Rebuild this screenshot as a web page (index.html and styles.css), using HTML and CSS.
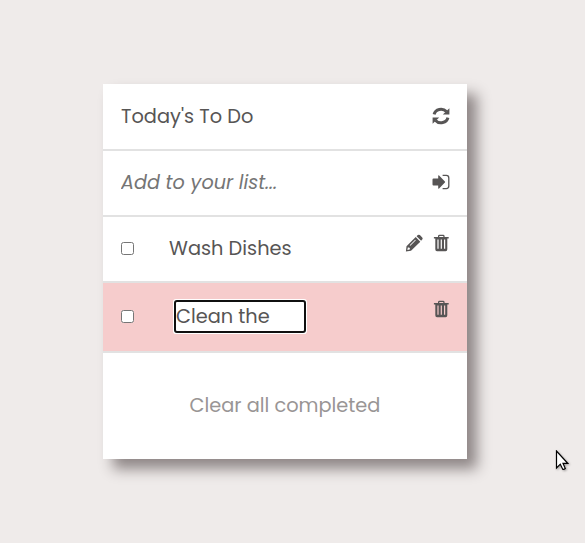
FILE: index.html
```html
<!DOCTYPE html>
<html lang="en">
<head>
<meta charset="utf-8">
<title>To Do List</title>
<link rel="stylesheet" href="styles.css">
</head>
<body>
<main class="card">
  <header class="row">
    <h1 class="title">Today's To Do</h1>
    <svg class="icon" viewBox="0 0 18 18"><path d="M2.1 7.4A7 6.4 0 0 1 14.4 4.6M15.9 10.6A7 6.4 0 0 1 3.6 13.4" fill="none" stroke="currentColor" stroke-width="3"/><path d="M17.4 1.2V7.6H10.8ZM.6 16.8V10.4H7.2Z"/></svg>
  </header>
  <form class="row">
    <input class="new-task" type="text" placeholder="Add to your list..." aria-label="New task">
    <svg class="icon" viewBox="0 0 18 18"><path d="M.5 6.5Q.5 5.5 1.5 5.5H6.2V2.9Q6.2 1.7 7.1 2.5L12.9 8.4Q13.4 9 12.9 9.6L7.1 15.5Q6.2 16.3 6.2 15.1V12.5H1.5Q.5 12.5.5 11.5Z"/><path d="M10.6 2.4H14.3Q16.8 2.4 16.8 4.9V13.1Q16.8 15.6 14.3 15.6H10.6" fill="none" stroke="currentColor" stroke-width="1.3"/></svg>
  </form>
  <section class="row">
    <input class="check" type="checkbox" aria-label="Wash Dishes">
    <span class="task">Wash Dishes</span>
    <div class="actions">
      <svg class="icon" viewBox="0 0 18 18"><path fill-rule="evenodd" d="M10.7 3.1L15.3 7.7 6 16.8.9 17.4 1.5 12.2ZM2.8 13.6 2.4 15.9 4.7 15.5 4.9 14.2 4.1 13.4ZM10.2 5.7 4.7 11.2 5.3 11.8 10.8 6.3ZM11.6 2.3 12.8 1.1Q13.9.2 14.9 1.1L17.2 3.4Q18.1 4.5 17.2 5.5L16.1 6.8Z"/></svg>
      <svg class="icon" viewBox="0 0 18 18"><use href="#trash"/></svg>
    </div>
  </section>
  <section class="row editing">
    <input class="check" type="checkbox" aria-label="Clean the">
    <input class="edit-task" type="text" value="Clean the" aria-label="Edit task">
    <div class="actions">
      <svg class="icon" viewBox="0 0 18 18"><path id="trash" fill-rule="evenodd" d="M6 3V1.9Q6.2.8 7.4.8H11.2Q12.4.8 12.6 1.9V3H16.7V4.4H15.3V15.3Q15.3 17.2 13.6 17.2H5Q3.3 17.2 3.3 15.3V4.4H1.9V3ZM7.3 3H11.3V1.9H7.3ZM5.4 5.6V14.7H6.6V5.6ZM8.7 5.6V14.7H9.9V5.6ZM12 5.6V14.7H13.2V5.6Z"/></svg>
    </div>
  </section>
  <footer class="footer"><button class="clear" type="button">Clear all completed</button></footer>
</main>
<svg class="cursor" viewBox="0 0 14 21"><path d="M1.5 1V18L5.3 14.2 7.7 19.2Q8.7 20 10.3 18.5L8 13.3H12.7Z" fill="#fff" stroke="#000" stroke-width="1.2"/></svg>
</body>
</html>
```
FILE: styles.css
```css
* { box-sizing: border-box; }

body {
  margin: 0;
  height: 543px;
  padding: 84px 118px 0 103px;
  overflow: hidden;
  background: #efebea;
  color: #575555;
  font: 400 19.35px/30px Poppins, sans-serif;
}

input, button {
  font: inherit;
  color: inherit;
}

.card {
  background: #fff;
  box-shadow: 10px 10px 13px 0 #8f8787;
}

.row {
  display: flex;
  align-items: center;
  height: 66px;
  padding: 0 17px 2px 18px;
  border-bottom: 2px solid #e2e2e2;
}

.row:first-child {
  height: 67px;
  padding-bottom: 1px;
}

.title {
  flex: 1;
  margin: 0;
  padding-top: 2px;
  font-size: inherit;
  font-weight: 400;
}

.new-task {
  flex: 1;
  min-width: 0;
  padding: 2px 0 0;
  border: 0;
  outline: 0;
  background: none;
  font-size: 19.2px;
  font-style: italic;
}

.new-task::placeholder { color: #757575; }

.check {
  width: 13px;
  height: 13px;
  margin: 0;
}

.task {
  margin-left: 35px;
  padding-top: 2px;
}

.actions {
  display: flex;
  gap: 9px;
  margin: 0 0 10px auto;
}

.icon {
  width: 18px;
  height: 18px;
  flex: none;
  fill: currentColor;
}

.editing {
  height: 70px;
  background: #f6cccc;
}

.editing .actions { margin-bottom: 14px; }

.edit-task {
  width: 128px;
  height: 29px;
  margin-left: 42px;
  padding: 2px 0 0;
  border: 0;
  border-radius: 1px;
  outline: 2px solid #101010;
  box-shadow: 0 0 0 3px #fff;
  background: #fff;
}

.footer {
  height: 106px;
  display: flex;
  align-items: center;
  justify-content: center;
}

.clear {
  padding: 0;
  border: 0;
  background: none;
  color: #999595;
}

.cursor {
  position: absolute;
  left: 555px;
  top: 450px;
  width: 14px;
  height: 21px;
  filter: drop-shadow(1px 1px 1px #0005);
}
```
